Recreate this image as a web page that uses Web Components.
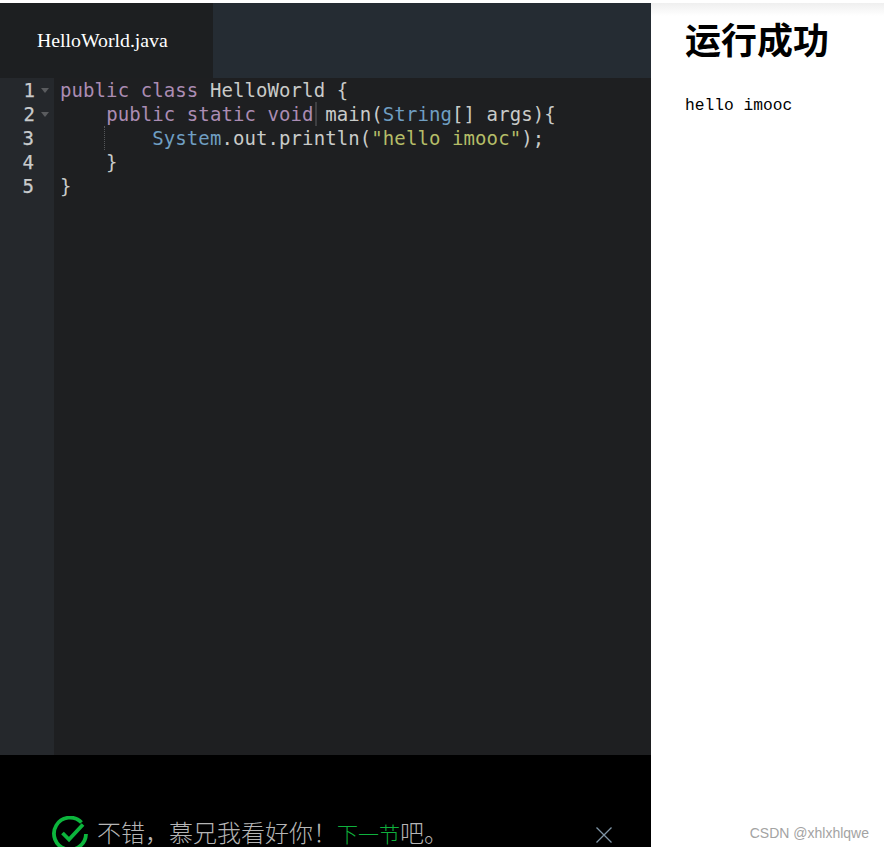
<!DOCTYPE html>
<html><head><meta charset="utf-8"><style>
html,body{margin:0;height:847px;overflow:hidden;background:#fff}
</style></head><body>
<app-shell>
<file-tabs slot="tabs" name="HelloWorld.java"></file-tabs>
<code-editor slot="editor"></code-editor>
<result-bar slot="bar"></result-bar>
<result-pane slot="result"></result-pane>
</app-shell>
<script>
function def(name,html){customElements.define(name,class extends HTMLElement{constructor(){super();this.attachShadow({mode:'open'}).innerHTML=html}})}
def('app-shell',`<style>:host{display:grid;grid-template-columns:651px 233px;height:847px;width:884px;overflow:hidden}
.l{display:flex;flex-direction:column;height:844px;margin-top:3px;min-height:0}
.r{min-width:0}</style>
<div class="l"><slot name="tabs"></slot><slot name="editor"></slot><slot name="bar"></slot></div>
<div class="r"><slot name="result"></slot></div>`);
customElements.define('file-tabs',class extends HTMLElement{constructor(){super();this.attachShadow({mode:'open'});}
connectedCallback(){this.shadowRoot.innerHTML=`<style>:host{display:flex;height:75px;background:#252c33;flex:none}
.t{width:213px;background:#1d1f21;color:#fff;font:19.8px/75px "Liberation Serif",serif;box-sizing:border-box;padding-left:37px}</style>
<div class="t">${this.getAttribute('name')}</div>`}});
const K=s=>`<span class="k">${s}</span>`,T=s=>`<span class="t">${s}</span>`,S=s=>`<span class="s">${s}</span>`;
const lines=[
`${K('public class')} HelloWorld {`,
`    ${K('public static void')}<i class="cur"></i> main(${T('String')}[] args){`,
`        ${T('System')}.out.println(${S('"hello imooc"')});`,
`    }`,
`}`];
def('code-editor',`<style>:host{display:flex;flex:none;height:677px;background:#1e1f21;font:19px/24px "DejaVu Sans Mono",monospace;color:#c9cbc9;letter-spacing:.09px}
.g{width:54px;flex:none;background:#25282c;color:#c9cbcc;box-sizing:border-box}
.n{display:flex;height:24px;justify-content:flex-end;align-items:center;padding-right:5px;gap:6px}
.n span{font-size:19px;-webkit-text-stroke:.25px #c9cbcc}
.n i{width:9px;display:block;margin-top:1px}
.n i.f{border-left:4.5px solid transparent;border-right:4.5px solid transparent;border-top:5px solid #5a5c5f;width:0;height:0}
.c{flex:1;padding:0 0 0 6px;white-space:pre;position:relative}
.c div{height:24px}
.k{color:#ab8cb3}.t{color:#6f9ec2}.s{color:#b5bd68}
.cur{display:inline-block;width:2px;height:24px;background:#3e3f42;vertical-align:top;margin-left:1px;margin-right:-3px}
.guide{position:absolute;left:50px;top:48px;height:24px;border-left:1px dotted #55575a}
</style>
<div class="g">${[1,2,3,4,5].map(n=>`<div class="n"><span>${n}</span><i class="${n<3?'f':'e'}"></i></div>`).join('')}</div>
<div class="c"><b class="guide"></b>${lines.map(l=>`<div>${l}</div>`).join('')}</div>`);
def('result-bar',`<style>:host{display:block;flex:1;background:#000;position:relative;overflow:hidden;min-height:0}
.row{display:flex;align-items:flex-start;margin-top:61px;padding-left:52px;font:300 24px/31px "Noto Sans CJK SC",sans-serif;color:#b5b5b5;white-space:nowrap}
svg.ok{width:36px;height:36px;flex:none;margin-right:9px}
.txt{display:flex;align-items:baseline}
a{color:#0fb13d;text-decoration:none;font-size:21px}
.x{position:absolute;left:596px;top:72px;width:16px;height:16px}
</style>
<div class="row"><svg class="ok" viewBox="0 0 36 36" fill="none" stroke="#0cb53c" stroke-width="3.8"><path d="M29.500 6.500A16 16 0 1 0 34 18"/><path d="M10.500 17l6.500 6.500L31 8.500"/></svg><div class="txt"><span>不错，慕兄我看好你！</span><a>下一节</a><span>吧。</span></div></div>
<svg class="x" viewBox="0 0 16 16" stroke="#7f95a6" stroke-width="1.300" fill="none"><path d="M.5.500l15 15M15.500.500l-15 15"/></svg>`);
def('result-pane',`<style>:host{display:block;height:847px;background:#fff;position:relative;box-sizing:border-box}
.sh{height:13px;margin-top:3px;background:linear-gradient(#efefef,#fff)}
.b{padding:0 0 0 34px;margin-top:-16px}
h1{margin:0;padding-top:15px;font:700 36px/46px "Noto Sans CJK SC",sans-serif;color:#000}
pre{margin:35px 0 0;font:16.25px/20px "Liberation Mono",monospace;color:#000}
.wm{position:absolute;right:15px;bottom:9px;font:14px/16px "Liberation Sans",sans-serif;color:#a3a3a3}
</style>
<div class="sh"></div>
<div class="b"><h1>运行成功</h1><pre>hello imooc</pre></div>
<div class="wm">CSDN @xhlxhlqwe</div>`);
</script></body></html>
